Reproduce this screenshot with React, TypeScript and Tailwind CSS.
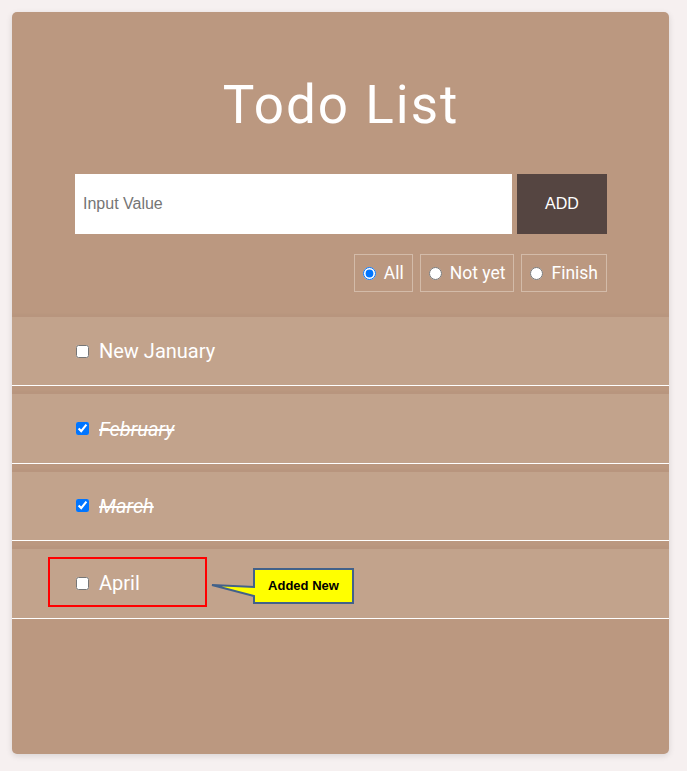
import React, { useState } from 'react'

type Todo = { id: number; text: string; done: boolean }

const initialTodos: Todo[] = [
  { id: 1, text: 'New January', done: false },
  { id: 2, text: 'February', done: true },
  { id: 3, text: 'March', done: true },
  { id: 4, text: 'April', done: false },
]

export default function App() {
  const [todos, setTodos] = useState(initialTodos)
  const [value, setValue] = useState('')
  const [filter, setFilter] = useState<'all' | 'notyet' | 'finish'>('all')

  const shown = todos.filter((t) => (filter === 'all' ? true : filter === 'finish' ? t.done : !t.done))

  return (
    <div className="min-h-screen bg-[#f6f0f0] pt-3 pl-3" style={{ fontFamily: 'Roboto, "Liberation Sans", sans-serif' }}>
      <div className="relative w-[657px] h-[742px] bg-[#bb9880] rounded-[5px] shadow-[0_2px_6px_rgba(0,0,0,0.12)]">
        <div className="pl-[63px] pr-[62px] pt-[67px] pb-[17px]">
          <h1 className="text-center text-white text-[53px] leading-[52px] tracking-[2px] font-normal">Todo List</h1>

          <form
            onSubmit={(e) => {
              e.preventDefault()
              if (value.trim() === '') return
              setTodos([...todos, { id: Date.now(), text: value, done: false }])
              setValue('')
            }}
            className="mt-[43px] flex gap-[5px] h-[60px]"
          >
            <input
              value={value}
              onChange={(e) => setValue(e.target.value)}
              placeholder="Input Value"
              className="flex-1 bg-white pl-2 text-[16px] text-[#333] placeholder:text-[#757575] outline-none"
              style={{ fontFamily: '"Liberation Sans", Arial, sans-serif' }}
            />
            <button
              type="submit"
              className="w-[90px] bg-[#554541] text-white text-[16px]"
              style={{ fontFamily: '"Liberation Sans", Arial, sans-serif' }}
            >
              ADD
            </button>
          </form>

          <div className="mt-5 flex justify-end gap-[7px]">
            {[
              { key: 'all', label: 'All' },
              { key: 'notyet', label: 'Not yet' },
              { key: 'finish', label: 'Finish' },
            ].map((f) => (
              <label
                key={f.key}
                className="h-[38px] flex items-center gap-2 px-2 border border-[#d3bba9] text-white text-[17.5px]"
              >
                <input
                  type="radio"
                  name="filter"
                  checked={filter === f.key}
                  onChange={() => setFilter(f.key as any)}
                  className="m-0 w-[13px] h-[13px]"
                />
                {f.label}
              </label>
            ))}
          </div>
        </div>

        <ul>
          {shown.map((t) => (
            <li
              key={t.id}
              className="mt-2 h-[69.4px] flex items-center bg-[#c2a38c] border-b border-white shadow-[0_-3px_3px_rgba(0,0,0,0.02)]"
            >
              <input
                type="checkbox"
                checked={t.done}
                onChange={() => setTodos(todos.map((x) => (x.id === t.id ? { ...x, done: !x.done } : x)))}
                className="ml-16 w-[13px] h-[13px] m-0"
              />
              <span className={`ml-[10px] text-white text-[20px] ${t.done ? 'italic line-through' : ''}`}>{t.text}</span>
            </li>
          ))}
        </ul>

        {/* annotation: red highlight + callout */}
        <div className="absolute left-[36px] top-[545px] w-[159px] h-[50px] border-2 border-[#ff0000] pointer-events-none" />
        <svg className="absolute left-[196px] top-[553px] pointer-events-none" width="150" height="42" viewBox="196 553 150 42">
          <path
            d="M242 557 H341 V591 H242 V584 L200 573 L242 575 Z"
            fill="#ffff00"
            stroke="#41618a"
            strokeWidth="2"
            strokeLinejoin="miter"
          />
        </svg>
        <div
          className="absolute left-[242px] top-[557px] w-[99px] h-[34px] flex items-center justify-center text-[13px] font-bold text-black pointer-events-none"
          style={{ fontFamily: '"Liberation Sans", Arial, sans-serif' }}
        >
          Added New
        </div>
      </div>
    </div>
  )
}
